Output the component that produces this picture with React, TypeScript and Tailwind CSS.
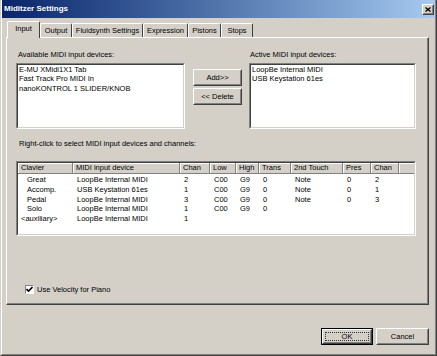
import React from "react";

const raisedOuter = "border border-t-white border-l-white border-r-[#404040] border-b-[#404040]";
const raisedInner = "border border-t-[#d4d0c8] border-l-[#d4d0c8] border-r-[#808080] border-b-[#808080]";
const sunkenOuter = "border border-t-[#808080] border-l-[#808080] border-r-white border-b-white";
const sunkenInner = "border border-t-[#404040] border-l-[#404040] border-r-[#d4d0c8] border-b-[#d4d0c8]";

function Btn({ label, w, def }: { label: string; w: string; def?: boolean }) {
  if (def) {
    return (
      <div className={`${w} h-[17px] border border-black flex`}>
        <div className={`flex-1 ${raisedOuter} flex`}>
          <div className={`flex-1 border border-t-[#d4d0c8] border-l-[#d4d0c8] border-r-[#808080] border-b-[#808080] flex items-center justify-center`}>
            <div className="border border-dotted border-[#333] w-[calc(100%-2px)] h-[calc(100%-2px)] flex items-center justify-center">
              {label}
            </div>
          </div>
        </div>
      </div>
    );
  }
  return (
    <div className={`${w} h-[17px] ${raisedOuter} flex`}>
      <div className={`flex-1 ${raisedInner} flex items-center justify-center`}>{label}</div>
    </div>
  );
}

function ListBox({ items, w }: { items: string[]; w: string }) {
  return (
    <div className={`${w} h-[66px] ${sunkenOuter} flex`}>
      <div className={`flex-1 ${sunkenInner} bg-white pl-[1px] leading-[9.4px]`}>
        {items.map((t) => (
          <div key={t} className="whitespace-nowrap">{t}</div>
        ))}
      </div>
    </div>
  );
}

const cols = [
  { h: "Clavier", w: "w-[55px]" },
  { h: "MIDI input device", w: "w-[107px]" },
  { h: "Chan", w: "w-[30px]" },
  { h: "Low", w: "w-[26px]" },
  { h: "High", w: "w-[23px]" },
  { h: "Trans", w: "w-[32px]" },
  { h: "2nd Touch", w: "w-[52px]" },
  { h: "Pres", w: "w-[28px]" },
  { h: "Chan", w: "w-[28px]" },
];

const rows: { cells: string[]; indent: boolean }[] = [
  { cells: ["Great", "LoopBe Internal MIDI", "2", "C00", "G9", "0", "Note", "0", "2"], indent: true },
  { cells: ["Accomp.", "USB Keystation 61es", "1", "C00", "G9", "0", "Note", "0", "1"], indent: true },
  { cells: ["Pedal", "LoopBe Internal MIDI", "3", "C00", "G9", "0", "Note", "0", "3"], indent: true },
  { cells: ["Solo", "LoopBe Internal MIDI", "1", "C00", "G9", "0", "", "", ""], indent: true },
  { cells: ["<auxiliary>", "LoopBe Internal MIDI", "1", "", "", "", "", "", ""], indent: false },
];

const tabs = [
  { t: "Input", w: "w-[33px]", sel: true },
  { t: "Output", w: "w-[32px]" },
  { t: "Fluidsynth Settings", w: "w-[71px]" },
  { t: "Expression", w: "w-[45px]" },
  { t: "Pistons", w: "w-[33px]" },
  { t: "Stops", w: "w-[32px]" },
];

export default function App() {
  return (
    <div className="w-[437px] h-[356px] bg-[#d4d0c8] flex border-l border-r border-b border-l-[#d4d0c8] border-r-[#404040] border-b-[#404040] text-black text-[7.5px] leading-[10px] font-['Liberation_Sans',Arial,sans-serif]">
      <div className="flex-1 flex flex-col border-l border-r border-b border-l-white border-r-[#808080] border-b-[#808080]">
        {/* Title bar */}
        <div className="h-[18px] flex items-center justify-between pl-[2px] pr-[1px] bg-linear-to-r from-[#0a246a] to-[#a6caf0]">
          <span className="text-white font-bold text-[8px]">Miditzer Settings</span>
          <div className={`w-[12px] h-[11px] ${raisedOuter} bg-[#d4d0c8] flex`}>
            <div className={`flex-1 ${raisedInner} flex items-center justify-center`}>
              <svg width="6" height="5" viewBox="0 0 6 5">
                <path d="M0.5 0.5 L5.5 4.5 M5.5 0.5 L0.5 4.5" stroke="black" strokeWidth="1.3" />
              </svg>
            </div>
          </div>
        </div>

        <div className="ml-[4px] mr-[6px] mt-[3px] flex flex-col">
          {/* Tabs */}
          <div className="h-[16px] flex items-end pl-[1px]">
            {tabs.map((tb) => (
              <div
                key={tb.t}
                className={`${tb.w} ${tb.sel ? "h-[17px] -mb-[1px] z-10 relative bg-[#d4d0c8] pb-[2px]" : "h-[14px]"} border-l border-t border-r border-l-white border-t-white border-r-[#404040] rounded-t-[2px] flex items-center justify-center whitespace-nowrap`}
              >
                {tb.t}
              </div>
            ))}
          </div>

          {/* Panel */}
          <div className="h-[268px] border border-t-white border-l-white border-r-[#404040] border-b-[#404040] flex">
            <div className="flex-1 border-r border-b border-r-[#808080] border-b-[#808080] flex flex-col pl-[9px]">
              <div className="flex mt-[12px]">
                <div className="w-[169px] flex flex-col">
                  <div className="h-[10px] pl-[2px] whitespace-nowrap">Available MIDI input devices:</div>
                  <div className="mt-[3px]">
                    <ListBox w="w-[169px]" items={["E-MU XMidi1X1 Tab", "Fast Track Pro MIDI In", "nanoKONTROL 1 SLIDER/KNOB"]} />
                  </div>
                </div>
                <div className="ml-[8px] w-[49px] pt-[19px] flex flex-col gap-[2px]">
                  <Btn label="Add>>" w="w-[49px]" />
                  <Btn label="<< Delete" w="w-[49px]" />
                </div>
                <div className="ml-[7px] w-[167px] flex flex-col">
                  <div className="h-[10px] pl-[1px] whitespace-nowrap">Active MIDI input devices:</div>
                  <div className="mt-[3px]">
                    <ListBox w="w-[167px]" items={["LoopBe Internal MIDI", "USB Keystation 61es"]} />
                  </div>
                </div>
              </div>

              <div className="mt-[10px] h-[10px] pl-[3px] whitespace-nowrap">
                Right-click to select MIDI input devices and channels:
              </div>

              {/* Table */}
              <div className={`mt-[12px] w-[400px] h-[75px] ${sunkenOuter} flex`}>
                <div className={`flex-1 ${sunkenInner} bg-white flex flex-col overflow-hidden`}>
                  <div className="h-[11px] flex bg-[#d4d0c8] border-b border-b-[#808080]">
                    {cols.map((c, i) => (
                      <div
                        key={i}
                        className={`${c.w} shrink-0 border-r border-r-[#808080] shadow-[inset_1px_1px_0_white] pl-[3px] leading-[10px] whitespace-nowrap`}
                      >
                        {c.h}
                      </div>
                    ))}
                    <div className="flex-1 shadow-[inset_1px_1px_0_white]" />
                  </div>
                  <div className="pt-[1px] leading-[9.8px]">
                    {rows.map((r, ri) => (
                      <div key={ri} className="flex h-[9.8px]">
                        {r.cells.map((c, ci) => (
                          <div
                            key={ci}
                            className={`${cols[ci].w} shrink-0 whitespace-nowrap ${ci === 0 ? (r.indent ? "pl-[9px]" : "pl-[3px]") : "pl-[4px]"}`}
                          >
                            {c}
                          </div>
                        ))}
                      </div>
                    ))}
                  </div>
                </div>
              </div>

              {/* Checkbox */}
              <div className="mt-[49px] ml-[9px] flex items-center h-[9px]">
                <div className={`w-[9px] h-[9px] ${sunkenOuter} bg-white flex items-center justify-center`}>
                  <svg width="7" height="7" viewBox="0 0 7 7">
                    <path d="M0.5 3 L2.5 5 L6.5 1" stroke="black" strokeWidth="1.6" fill="none" />
                  </svg>
                </div>
                <span className="ml-[3px] whitespace-nowrap">Use Velocity for Piano</span>
              </div>
            </div>
          </div>

          {/* Footer buttons */}
          <div className="mt-[23px] flex justify-end gap-[3px]">
            <Btn label="OK" w="w-[52px]" def />
            <Btn label="Cancel" w="w-[53px]" />
          </div>
        </div>
      </div>
    </div>
  );
}
